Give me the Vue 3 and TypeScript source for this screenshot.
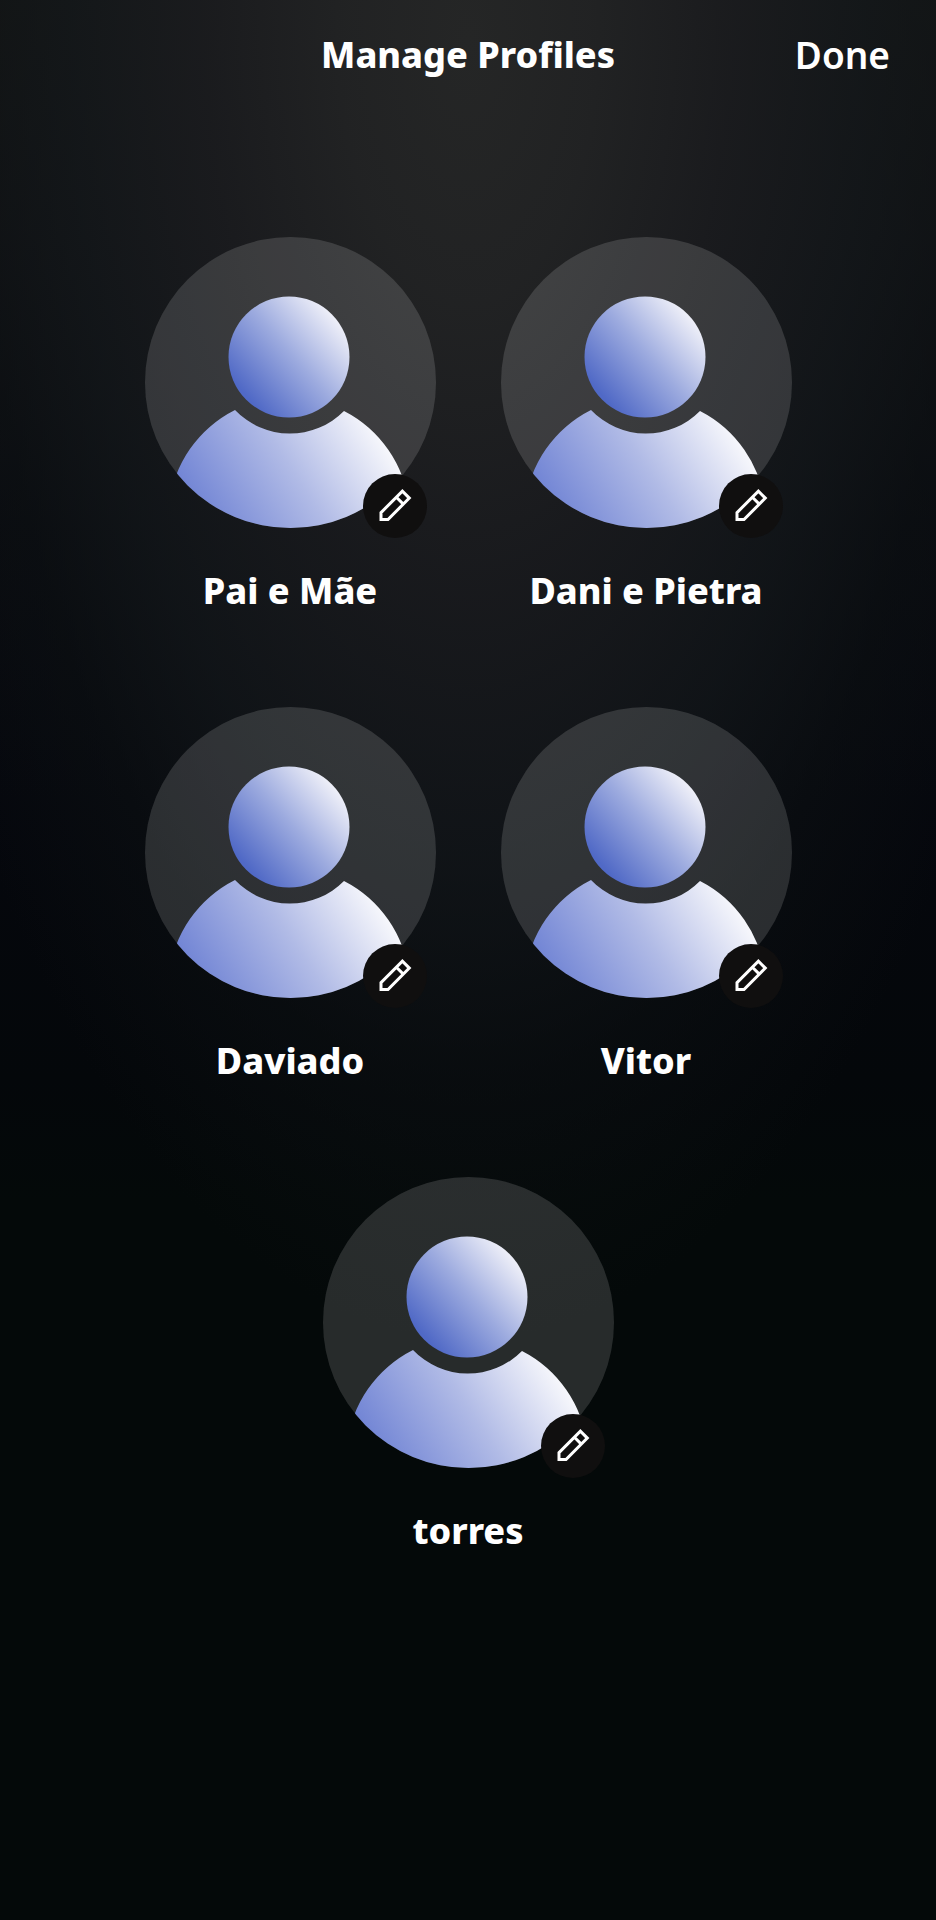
<script setup lang="ts">
interface Profile {
  id: number
  name: string
}

const profiles: Profile[] = [
  { id: 1, name: 'Pai e Mãe' },
  { id: 2, name: 'Dani e Pietra' },
  { id: 3, name: 'Daviado' },
  { id: 4, name: 'Vitor' },
  { id: 5, name: 'torres' },
]
</script>

<template>
  <div class="screen">
    <header class="bar">
      <h1 class="title">Manage Profiles</h1>
      <button class="done" type="button">Done</button>
    </header>

    <main>
      <ul class="profiles">
        <li v-for="profile in profiles" :key="profile.id">
          <button class="profile" type="button">
            <span class="avatar">
              <svg class="person" viewBox="0 0 291 291" aria-hidden="true">
                <defs>
                  <clipPath :id="`disc-${profile.id}`">
                    <circle cx="145.5" cy="145.5" r="145.5" />
                  </clipPath>
                  <linearGradient :id="`head-${profile.id}`" gradientUnits="userSpaceOnUse" x1="106" y1="164" x2="198" y2="84">
                    <stop offset="0" stop-color="#5069c6" />
                    <stop offset="0.5" stop-color="#9dabdf" />
                    <stop offset="1" stop-color="#f4f4fa" />
                  </linearGradient>
                  <linearGradient :id="`body-${profile.id}`" gradientUnits="userSpaceOnUse" x1="64" y1="284" x2="228" y2="178">
                    <stop offset="0" stop-color="#7386d5" />
                    <stop offset="0.5" stop-color="#b1bbe6" />
                    <stop offset="1" stop-color="#fbfbfd" />
                  </linearGradient>
                </defs>
                <circle cx="144" cy="120" r="60.5" :fill="`url(#head-${profile.id})`" />
                <path
                  d="M90 173A76 76 0 0 0 199 174A121 121 0 0 1 264 268V291H24V268A121 121 0 0 1 90 173Z"
                  :clip-path="`url(#disc-${profile.id})`"
                  :fill="`url(#body-${profile.id})`"
                />
              </svg>
              <span class="badge">
                <svg viewBox="0 0 64 64" aria-hidden="true">
                  <path d="M18 45.5V38.6L39.4 17.2L46.3 24.1L25 45.5ZM33.4 23.2L40.3 30.1" />
                </svg>
              </span>
            </span>
            <span class="name">{{ profile.name }}</span>
          </button>
        </li>
      </ul>
    </main>
  </div>
</template>

<style>
body {
  margin: 0;
  background: #040909;
}
</style>

<style scoped>
.screen {
  box-sizing: border-box;
  min-height: 100vh;
  color: #fff;
  font-family: "Noto Sans", "Open Sans", sans-serif;
  background:
    radial-gradient(ellipse 66% 1300px at 50% 40px, rgb(37, 38, 38), rgba(34, 35, 36, 0.95) 20%, rgba(27, 28, 31, 0.85) 42%, rgba(19, 23, 26, 0.75) 64%, rgba(13, 17, 19, 0.5) 80%, rgba(5, 9, 10, 0)),
    linear-gradient(#171817, #121316 240px, #090b10 520px, #05070d 800px, #04070a 1080px, #040909 1200px);
}

.bar {
  display: grid;
  grid-template-columns: 1fr auto 1fr;
  align-items: center;
  height: 110px;
  padding: 0 46px;
}

.title {
  grid-column: 2;
  margin: 0;
  font-size: 36px;
  font-weight: 800;
  line-height: 48px;
}

.done {
  justify-self: end;
  padding: 0;
  border: 0;
  background: none;
  color: inherit;
  font: 600 37px/48px "Noto Sans", "Open Sans", sans-serif;
  cursor: pointer;
}

.profiles {
  display: flex;
  flex-wrap: wrap;
  justify-content: center;
  gap: 91px 65px;
  max-width: 760px;
  margin: 0 auto;
  padding: 127px 0 64px;
  list-style: none;
}

.profile {
  display: flex;
  flex-direction: column;
  align-items: center;
  gap: 37px;
  width: 291px;
  padding: 0;
  border: 0;
  background: none;
  color: inherit;
  font: inherit;
  cursor: pointer;
}

.avatar {
  position: relative;
  width: 100%;
  aspect-ratio: 1;
  border-radius: 50%;
  background: rgba(255, 255, 255, 0.14);
}

.person {
  display: block;
  width: 100%;
}

.badge {
  position: absolute;
  right: 9px;
  bottom: -10px;
  width: 64px;
  height: 64px;
  border-radius: 50%;
  background: #100f0f;
}

.badge svg {
  display: block;
  fill: none;
  stroke: #fff;
  stroke-width: 3;
}

.name {
  font-size: 36px;
  font-weight: 800;
  line-height: 51px;
  white-space: nowrap;
}
</style>
